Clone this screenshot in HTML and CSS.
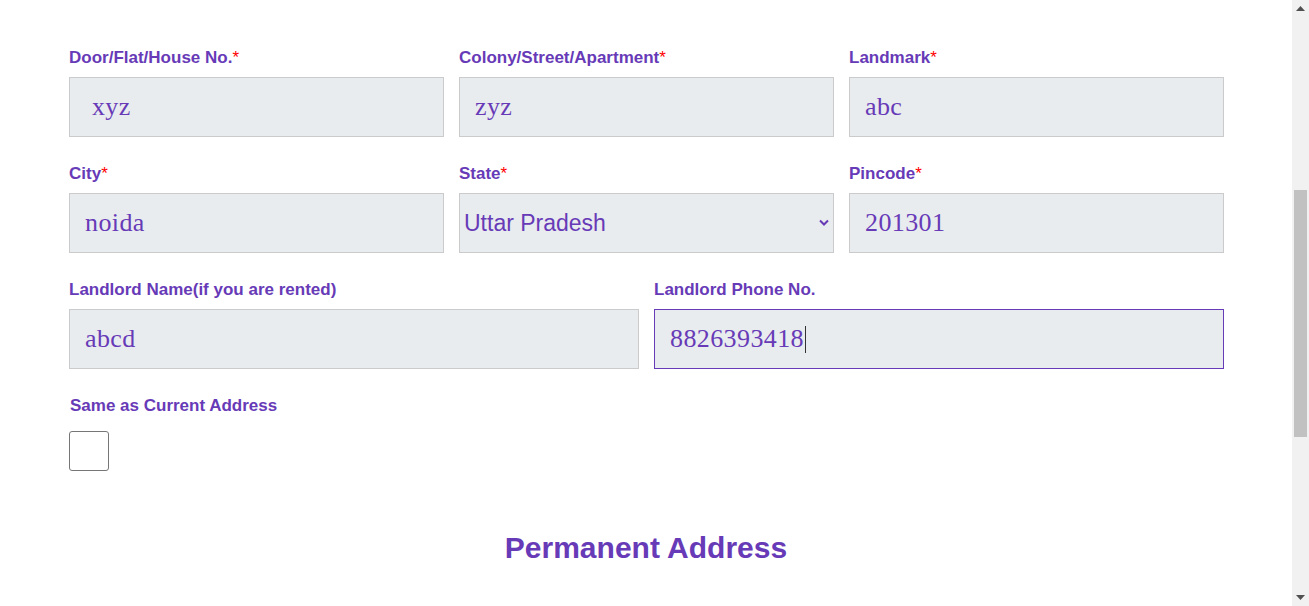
FILE: index.html
```html
<!DOCTYPE html>
<html lang="en">
<head>
<meta charset="utf-8">
<title>Address</title>
<link rel="stylesheet" href="styles.css">
</head>
<body>
<div class="page">
  <main class="main">
    <form class="form">
      <div class="row row-3">
        <div class="field">
          <label class="label">Door/Flat/House No.<span class="req">*</span></label>
          <input class="input" type="text" value=" xyz">
        </div>
        <div class="field">
          <label class="label">Colony/Street/Apartment<span class="req">*</span></label>
          <input class="input" type="text" value="zyz">
        </div>
        <div class="field">
          <label class="label">Landmark<span class="req">*</span></label>
          <input class="input" type="text" value="abc">
        </div>
      </div>
      <div class="row row-3">
        <div class="field">
          <label class="label">City<span class="req">*</span></label>
          <input class="input" type="text" value="noida">
        </div>
        <div class="field">
          <label class="label">State<span class="req">*</span></label>
          <div class="select-wrap">
            <select class="select">
              <option>Uttar Pradesh</option>
            </select>
            <svg class="chevron" width="10" height="7" viewBox="0 0 10 7"><path d="M1 1.5 L5 5.5 L9 1.5" fill="none" stroke="#673ab7" stroke-width="2"/></svg>
          </div>
        </div>
        <div class="field">
          <label class="label">Pincode<span class="req">*</span></label>
          <input class="input" type="text" value="201301">
        </div>
      </div>
      <div class="row row-2">
        <div class="field">
          <label class="label">Landlord Name(if you are rented)</label>
          <input class="input" type="text" value="abcd">
        </div>
        <div class="field">
          <label class="label">Landlord Phone No.</label>
          <div class="input input-focus">8826393418<span class="caret"></span></div>
        </div>
      </div>
      <div class="field check-field">
        <label class="label">Same as Current Address</label>
        <span class="checkbox"></span>
      </div>
      <h2 class="heading">Permanent Address</h2>
    </form>
  </main>
  <div class="scrollbar">
    <div class="sb-btn"><svg width="9" height="5" viewBox="0 0 9 5"><path d="M0 5 L4.5 0 L9 5 Z" fill="#505050"/></svg></div>
    <div class="sb-track"><div class="sb-thumb"></div></div>
    <div class="sb-btn"><svg width="9" height="5" viewBox="0 0 9 5"><path d="M0 0 L4.5 5 L9 0 Z" fill="#505050"/></svg></div>
  </div>
</div>
</body>
</html>
```
FILE: styles.css
```css
html, body {
  margin: 0;
  padding: 0;
  overflow: hidden;
  background: #ffffff;
}
.page {
  display: flex;
  height: 100vh;
}
.main {
  flex: 1;
  overflow: hidden;
}
.form {
  padding: 48px 0 0 69px;
  font-family: "Liberation Sans", Arial, sans-serif;
  color: #673ab7;
}
.row {
  display: grid;
  column-gap: 15px;
  margin-bottom: 27px;
}
.row-3 { grid-template-columns: repeat(3, 375px); }
.row-2 { grid-template-columns: repeat(2, 570px); }
.field {
  display: flex;
  flex-direction: column;
}
.label {
  display: block;
  font-size: 17px;
  font-weight: bold;
  line-height: 20px;
  height: 20px;
  margin-bottom: 9px;
  color: #673ab7;
  white-space: nowrap;
}
.req {
  color: #ff0000;
  font-weight: normal;
}
.input {
  box-sizing: border-box;
  height: 60px;
  width: 100%;
  margin: 0;
  padding: 0 15px;
  border: 1px solid #cbcbcb;
  background: #e9ecef;
  font-family: "Liberation Serif", "Times New Roman", serif;
  font-size: 26px;
  letter-spacing: 0.4px;
  color: #673ab7;
  outline: none;
}
.input-focus {
  display: flex;
  align-items: center;
  border-color: #673ab7;
}
.caret {
  display: inline-block;
  width: 1px;
  height: 27px;
  background: #333;
  margin-left: 1px;
}
.select-wrap {
  position: relative;
  height: 60px;
}
.select {
  appearance: none;
  -webkit-appearance: none;
  box-sizing: border-box;
  height: 60px;
  width: 100%;
  margin: 0;
  padding: 0 30px 0 4px;
  border: 1px solid #cbcbcb;
  border-radius: 0;
  background: #e9ecef;
  font-family: "Liberation Sans", Arial, sans-serif;
  font-size: 23px;
  color: #673ab7;
  outline: none;
}
.chevron {
  position: absolute;
  right: 5px;
  top: 26px;
  pointer-events: none;
}
.check-field .label {
  margin-left: 1px;
  margin-bottom: 15px;
}
.checkbox {
  display: block;
  box-sizing: border-box;
  width: 40px;
  height: 40px;
  border: 1px solid #767676;
  border-radius: 3px;
  background: #fff;
}
.heading {
  margin: 60px 0 0 -69px;
  width: 1292px;
  text-align: center;
  font-size: 30px;
  font-weight: bold;
  line-height: 34px;
  color: #673ab7;
}
.scrollbar {
  width: 17px;
  background: #f1f1f1;
  display: flex;
  flex-direction: column;
}
.sb-btn {
  height: 17px;
  display: flex;
  align-items: center;
  justify-content: center;
}
.sb-track {
  flex: 1;
}
.sb-thumb {
  margin: 173px 2px 0 2px;
  height: 247px;
  background: #c1c1c1;
}
```
